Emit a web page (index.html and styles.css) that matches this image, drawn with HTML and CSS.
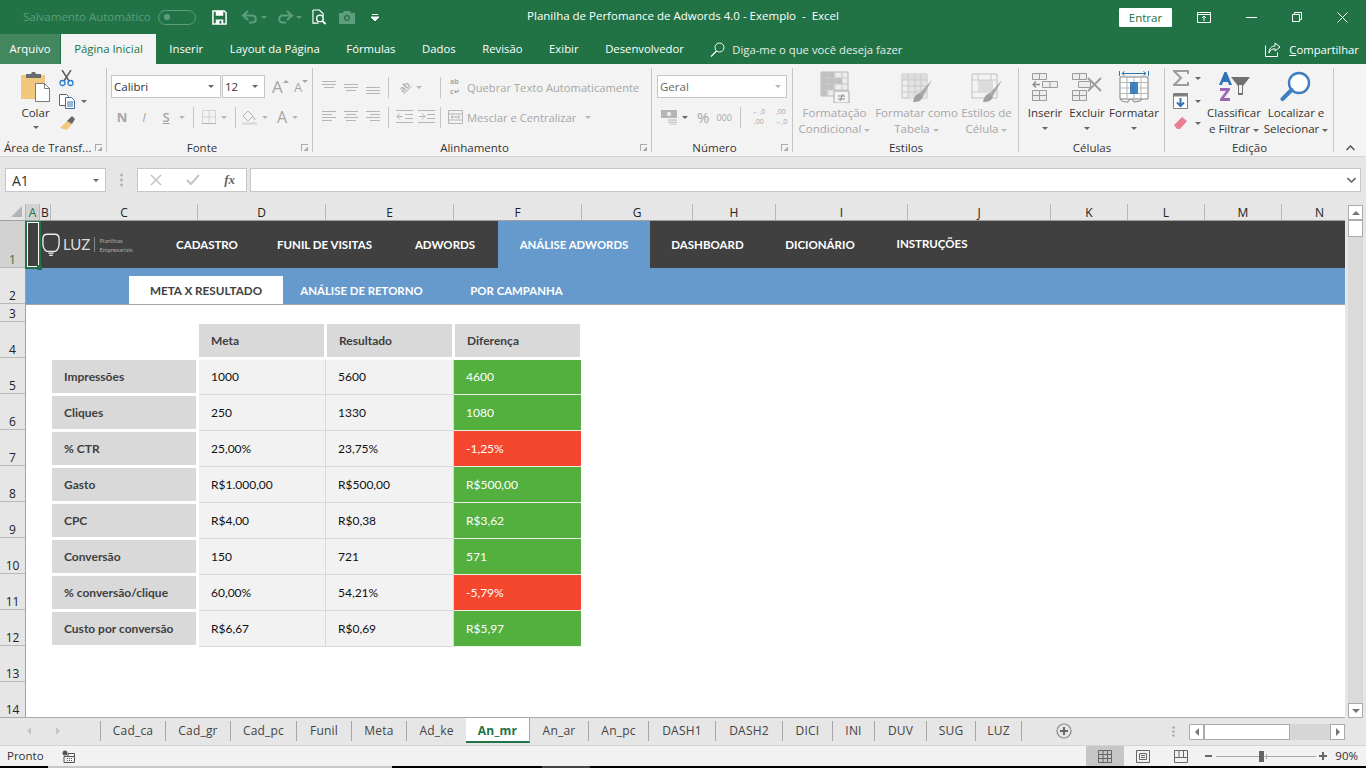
FILE: index.html
```html
<!DOCTYPE html>
<html lang="pt-BR">
  <head>
    <meta charset="UTF-8" />
    <title>Planilha de Perfomance de Adwords 4.0 - Exemplo - Excel</title>
    <link rel="stylesheet" href="styles.css">
  </head>
  <body>
    <!-- Title bar -->
    <div class="titlebar">
      <div class="qat">
        <span class="autosave">Salvamento Automático</span>
        <span class="toggle"><i></i></span>
        <svg class="q-save" width="15" height="15" viewBox="0 0 16 16"><path d="M1 1h12l2 2v12H1z" fill="none" stroke="#fff" stroke-width="1.600"/><path d="M4 1h8v5H4zM4 10h8v5H4z" fill="#fff"/><path d="M8 11.500h2v3H8z" fill="#217346"/></svg>
        <svg class="q-undo" width="18" height="14" viewBox="0 0 18 14"><path d="M7 1 2 5.500 7 10M2 5.500h9c5 0 5 7 0 7H8" fill="none" stroke="#5e9e7d" stroke-width="2"/></svg>
        <span class="caret dim"></span>
        <svg class="q-redo" width="18" height="14" viewBox="0 0 18 14"><path d="M11 1l5 4.500L11 10M16 5.500H7c-5 0-5 7 0 7h3" fill="none" stroke="#5e9e7d" stroke-width="2"/></svg>
        <span class="caret dim"></span>
        <svg class="q-prev" width="14" height="16" viewBox="0 0 15 17"><path d="M1 1h7l4 4v3M1 1v14h6" fill="none" stroke="#fff" stroke-width="1.200"/><circle cx="8.500" cy="10" r="3.500" fill="none" stroke="#fff" stroke-width="1.500"/><path d="m11 12.500 3.500 3.500" stroke="#fff" stroke-width="2"/></svg>
        <svg class="q-cam" width="16" height="13" viewBox="0 0 16 13"><path d="M0 2h4l1-2h6l1 2h4v11H0z" fill="#5e9e7d"/><circle cx="8" cy="7" r="3" fill="#217346"/><circle cx="8" cy="7" r="1.800" fill="#5e9e7d"/></svg>
        <svg class="q-more" width="8" height="7" viewBox="0 0 8 7"><path d="M1 .5h6M0 3h8L4 7z" stroke="#fff" fill="#fff" stroke-width="1"/></svg>
      </div>
      <div class="doc-title">Planilha de Perfomance de Adwords 4.0 - Exemplo &nbsp;-&nbsp; Excel</div>
      <div class="win">
        <button class="signin">Entrar</button>
        <svg class="w-opt" width="14" height="11" viewBox="0 0 14 11"><path d="M.5.500h13v10H.5zM.5 2.500h13" fill="none" stroke="#fff"/><path d="M7 9V4M5 6l2-2 2 2" fill="none" stroke="#fff"/></svg>
        <svg class="w-min" width="11" height="1" viewBox="0 0 11 1"><path d="M0 .5h11" stroke="#fff"/></svg>
        <svg class="w-max" width="10" height="10" viewBox="0 0 10 10"><path d="M.5 2.500h7v7h-7zM2.500 2.500v-2h7v7h-2" fill="none" stroke="#fff"/></svg>
        <svg class="w-close" width="11" height="11" viewBox="0 0 11 11"><path d="m.5.500 10 10M10.500.500l-10 10" stroke="#fff"/></svg>
      </div>
    </div>

    <!-- Ribbon tabs -->
    <div class="tabs">
      <div class="tab file">Arquivo</div>
      <div class="tab active">Página Inicial</div>
      <div class="tab">Inserir</div>
      <div class="tab">Layout da Página</div>
      <div class="tab">Fórmulas</div>
      <div class="tab">Dados</div>
      <div class="tab">Revisão</div>
      <div class="tab">Exibir</div>
      <div class="tab">Desenvolvedor</div>
      <div class="tell">
        <svg width="15" height="15" viewBox="0 0 15 15"><circle cx="9.500" cy="5.500" r="4.500" fill="none" stroke="#fff"/><path d="M6.500 9 1 14.500" stroke="#fff" stroke-width="1.200"/></svg>
        <span>Diga-me o que você deseja fazer</span>
      </div>
      <div class="share">
        <svg width="17" height="15" viewBox="0 0 17 15"><path d="M.5 3.500v11h12v-4" fill="none" stroke="#fff"/><path d="M10 1l5 4-5 4V6.800C7 6.800 5 8 4 11c0-4 2-6.800 6-7z" fill="none" stroke="#fff"/></svg>
        <span><u>C</u>ompartilhar</span>
      </div>
    </div>

    <!-- Ribbon -->
    <div class="ribbon">
      <div class="group g-clip">
        <div class="body clip-body">
          <div class="big paste">
            <svg width="32" height="32" viewBox="0 0 32 32"><path d="M1 4h24v24H1z" fill="#f0c97f"/><path d="M6 3h5l1-2h3l1 2h5v4H6z" fill="#6b6b6b"/><path d="M15.500 12.500h9l5 5v13h-14z" fill="#fff" stroke="#7a7a7a"/><path d="M24.500 12.500v5h5" fill="none" stroke="#7a7a7a"/></svg>
            <span>Colar</span>
            <span class="caret"></span>
          </div>
          <div class="clip-tools">
            <svg width="16" height="17" viewBox="0 0 16 17"><path d="m3 0 7 11M12 0 5 11" stroke="#555" stroke-width="1.400"/><circle cx="3.500" cy="13" r="2.500" fill="none" stroke="#2b7cd3" stroke-width="1.300"/><circle cx="11.500" cy="13" r="2.500" fill="none" stroke="#2b7cd3" stroke-width="1.300"/></svg>
            <div class="tool-line">
              <svg width="16" height="15" viewBox="0 0 16 15"><path d="M.5.500h7l2 2v9H.5z" fill="#fff" stroke="#666"/><path d="M6.500 3.500h6l3 3v8h-9z" fill="#fff" stroke="#3c6ea5"/><path d="M8 8h6M8 10h6M8 12h6" stroke="#3c6ea5"/></svg>
              <span class="caret"></span>
            </div>
            <svg width="16" height="15" viewBox="0 0 16 15"><path d="m9 4 4 4-5 6-7-2z" fill="#f0c97f"/><path d="m8 5 5-5 3 3-3 5z" fill="#666"/></svg>
          </div>
        </div>
        <div class="label left">Área de Transf...<i class="launch"></i></div>
      </div>

      <div class="group g-font">
        <div class="body rows">
          <div class="line">
            <div class="combo c-font">Calibri<span class="caret"></span></div>
            <div class="combo c-size">12<span class="caret"></span></div>
            <span class="letter a-up">A<em class="tri up"></em></span>
            <span class="letter a-down">A<em class="tri"></em></span>
          </div>
          <div class="line">
            <span class="slot b">N</span>
            <span class="slot it">I</span>
            <span class="slot under">S</span>
            <span class="caret pale first"></span>
            <span class="sep"></span>
            <svg width="14" height="14" viewBox="0 0 14 14"><path d="M.5.500h13v13H.5zM7 .5v13M.5 7h13" fill="none" stroke="#b5b5b5" stroke-dasharray="1 1"/><path d="M0 13.500h14" stroke="#b5b5b5"/></svg>
            <span class="caret pale"></span>
            <span class="sep"></span>
            <svg class="fill-ico" width="15" height="15" viewBox="0 0 15 15"><path d="M6 1 1 6l5 5 5-5z" fill="none" stroke="#b5b5b5"/><path d="M11 6c2 2 3 4 2 4s-2-2-2-4z" fill="#b5b5b5"/><path d="M0 12h15v3H0z" fill="#dedede"/></svg>
            <span class="caret pale"></span>
            <span class="letter a-color">A</span>
            <span class="caret pale"></span>
          </div>
        </div>
        <div class="label with-launch">Fonte<i class="launch"></i></div>
      </div>

      <div class="group g-align">
        <div class="body rows">
          <div class="line">
            <svg class="al" width="14" height="14" viewBox="0 0 14 14"><path d="M0 1.500h14M0 4.500h14M2 7.500h10" stroke="#b5b5b5"/></svg>
            <svg class="al" width="14" height="14" viewBox="0 0 14 14"><path d="M0 4.500h14M0 7.500h14M2 10.500h10" stroke="#b5b5b5"/></svg>
            <svg class="al" width="14" height="14" viewBox="0 0 14 14"><path d="M0 7.500h14M0 10.500h14M0 13.500h14" stroke="#b5b5b5"/></svg>
            <span class="sep s-first"></span>
            <span class="orient"><b>ab</b></span>
            <span class="caret pale"></span>
            <span class="sep s-wrap"></span>
            <span class="wrap-ico">ab<br>c↵</span>
            <span class="dis wrap-text">Quebrar Texto Automaticamente</span>
          </div>
          <div class="line">
            <svg class="al" width="14" height="14" viewBox="0 0 14 14"><path d="M0 1.500h14M0 4.500h10M0 7.500h14M0 10.500h10" stroke="#b5b5b5"/></svg>
            <svg class="al" width="14" height="14" viewBox="0 0 14 14"><path d="M0 1.500h14M2 4.500h10M0 7.500h14M2 10.500h10" stroke="#b5b5b5"/></svg>
            <svg class="al" width="14" height="14" viewBox="0 0 14 14"><path d="M0 1.500h14M4 4.500h10M0 7.500h14M4 10.500h10" stroke="#b5b5b5"/></svg>
            <span class="sep s-first"></span>
            <svg width="17" height="14" viewBox="0 0 17 14"><path d="M0 .5h17M9 4.500h8M9 8.500h8M0 12.500h17M7 6.500H1M4 3.500l-3 3 3 3" fill="none" stroke="#b5b5b5"/></svg>
            <svg class="ind" width="17" height="14" viewBox="0 0 17 14"><path d="M0 .5h17M9 4.500h8M9 8.500h8M0 12.500h17M1 6.500h6M4 3.500l3 3-3 3" fill="none" stroke="#b5b5b5"/></svg>
            <span class="sep s-wrap2"></span>
            <svg width="15" height="14" viewBox="0 0 15 14"><path d="M.5.500h14v13H.5zM.5 4h14M.5 10h14M3 7h9M3 7l2-1.500M3 7l2 1.500M12 7l-2-1.500M12 7l-2 1.500" fill="none" stroke="#b5b5b5"/></svg>
            <span class="dis merge-text">Mesclar e Centralizar</span>
            <span class="caret pale merge-caret"></span>
          </div>
        </div>
        <div class="label with-launch">Alinhamento<i class="launch"></i></div>
      </div>

      <div class="group g-num">
        <div class="body rows">
          <div class="line">
            <div class="combo c-num">Geral<span class="caret pale"></span></div>
          </div>
          <div class="line num-tools">
            <svg width="16" height="15" viewBox="0 0 16 15"><path d="M0 0h16v8H0z" fill="#b5b5b5"/><circle cx="8" cy="4" r="2" fill="#f3f3f3"/><path d="M7 10h9M7 12.500h9M9 15h6" stroke="#c8c8c8" stroke-width="1.500"/></svg>
            <span class="caret"></span>
            <span class="dis pct">%</span>
            <span class="dis thou">000</span>
            <span class="sep"></span>
            <span class="dis dec">←,0<br>,00</span>
            <span class="dis dec">,00<br>→,0</span>
          </div>
        </div>
        <div class="label with-launch">Número<i class="launch"></i></div>
      </div>

      <div class="group g-styles">
        <div class="body bigs">
          <div class="big dis s1">
            <svg width="30" height="32" viewBox="0 0 30 32"><path d="M1 1h27v24H1z" fill="#ececec" stroke="#b8b8b8"/><path d="M1 1h13v6h8v6h-8v6H7v6H1z" fill="#c0c0c0"/><path d="M8 1v24M15 1v24M22 1v24M1 7h27M1 13h27M1 19h27" stroke="#c9c9c9"/><path d="M14 20h15v12H14z" fill="#f3f3f3" stroke="#a8a8a8"/><path d="M18 25h7M18 28h7M20 30l3-7" stroke="#8c8c8c"/></svg>
            <span>Formatação</span>
            <span>Condicional <i class="caret pale"></i></span>
          </div>
          <div class="big dis s2">
            <svg width="32" height="32" viewBox="0 0 32 32"><path d="M1 3h25v24H1z" fill="#f0f0f0" stroke="#c0c0c0"/><path d="M1 3h25v6H1z" fill="#dcdcdc"/><path d="M7 9h19v18H7z" fill="#e3e3e3"/><path d="M7 3v24M14 3v24M20 3v24M1 9h25M1 15h25M1 21h25" stroke="#c9c9c9"/><path d="M31 9 19 22l3 3z" fill="#a8a8a8"/><path d="M19 22c-4 1-6 4-7 9 5 0 9-1 10-6z" fill="#a0a0a0"/></svg>
            <span>Formatar como</span>
            <span>Tabela <i class="caret pale"></i></span>
          </div>
          <div class="big dis s3">
            <svg width="32" height="32" viewBox="0 0 32 32"><path d="M1 3h25v24H1z" fill="#f3f3f3" stroke="#c0c0c0"/><path d="M7 9h15v13H7z" fill="#dcdcdc"/><path d="M7 3v6M20 3v6M1 9h25M1 21h6" stroke="#c9c9c9"/><path d="M31 9 19 22l3 3z" fill="#a8a8a8"/><path d="M19 22c-4 1-6 4-7 9 5 0 9-1 10-6z" fill="#a0a0a0"/></svg>
            <span>Estilos de</span>
            <span>Célula <i class="caret pale"></i></span>
          </div>
        </div>
        <div class="label">Estilos</div>
      </div>

      <div class="group g-cells">
        <div class="body bigs">
          <div class="big c1">
            <svg width="28" height="32" viewBox="0 0 28 32"><path d="M1.500 2.500h14v6h-14zM8.500 2.500v6M1.500 19.500h14v10h-14zM1.500 24.500h14M8.500 19.500v10M11.500 10.500h15v6h-15zM19 10.500v6" fill="#ededed" stroke="#9c9c9c"/><path d="M9 13.500H2M5 10.500l-3 3 3 3" fill="none" stroke="#8c8c8c" stroke-width="1.400"/></svg>
            <span>Inserir</span>
            <i class="caret"></i>
          </div>
          <div class="big c2">
            <svg width="32" height="32" viewBox="0 0 32 32"><path d="M1.500 2.500h14v6h-14zM8.500 2.500v6M1.500 19.500h14v10h-14zM1.500 24.500h14M8.500 19.500v10M7.500 10.500h12v6h-12z" fill="#ededed" stroke="#9c9c9c"/><path d="m17 7 13 13M30 7 17 20" stroke="#9c9c9c" stroke-width="1.800"/></svg>
            <span>Excluir</span>
            <i class="caret"></i>
          </div>
          <div class="big c3">
            <svg width="30" height="32" viewBox="0 0 30 32"><path d="M.5 0v5M29.500 0v5M3 2.500h24M3 2.500l2.500-2M3 2.500l2.500 2M27 2.500l-2.500-2M27 2.500l-2.500 2" fill="none" stroke="#2f75b5"/><path d="M1 6h28v22H1z" fill="#fff" stroke="#808080"/><path d="M8 6v22M15 6v22M22 6v22M1 11.500h28M1 17h28M1 22.500h28" stroke="#b5b5b5"/><path d="M11 11h8v12h-8z" fill="#2f75b5" opacity=".9"/><path d="M1 28c2 3 5 3 8 3l2-3M13 28l2 3 6-1 2-2" fill="none" stroke="#808080"/></svg>
            <span>Formatar</span>
            <i class="caret"></i>
          </div>
        </div>
        <div class="label">Células</div>
      </div>

      <div class="group g-edit">
        <div class="body edit-body">
          <div class="edit-tools">
            <div class="tool-line">
              <svg width="16" height="16" viewBox="0 0 16 16"><path d="M15 4V1H1l7 7-7 7h14v-3" fill="none" stroke="#9c9c9c" stroke-width="2"/></svg>
              <span class="caret"></span>
            </div>
            <div class="tool-line">
              <svg width="16" height="16" viewBox="0 0 16 16"><path d="M.5.500h14v15H.5z" fill="#fff" stroke="#808080"/><path d="M.5.500h14v3H.5z" fill="#808080"/><path d="M7.500 5v8M4 9.500l3.500 3.500L11 9.500" fill="none" stroke="#2f75b5" stroke-width="2"/></svg>
              <span class="caret"></span>
            </div>
            <div class="tool-line">
              <svg width="16" height="14" viewBox="0 0 16 14"><path d="m1 9 8-8 5 4-7 8H4z" fill="#e97f93"/></svg>
              <span class="caret"></span>
            </div>
          </div>
          <div class="big e1">
            <svg width="32" height="32" viewBox="0 0 32 32"><path d="M1 14 6.500 1h2L14 14h-3l-1-3H5l-1 3z" fill="#2f75b5"/><path d="M2 17h10v2l-6 8h6v3H2v-2l6-8H2z" fill="#9a67b5"/><path d="M13 6h19l-7 9v9h-5v-9z" fill="#707070"/><path d="M21 14h3v8h-3z" fill="#f3f3f3"/></svg>
            <span>Classificar</span>
            <span>e Filtrar <i class="caret"></i></span>
          </div>
          <div class="big e2">
            <svg width="32" height="32" viewBox="0 0 32 32"><circle cx="19" cy="12" r="10" fill="#fff" stroke="#3f7fbf" stroke-width="2.400"/><path d="M11.500 19 2.500 28" stroke="#3f7fbf" stroke-width="4" stroke-linecap="round"/></svg>
            <span>Localizar e</span>
            <span>Selecionar <i class="caret"></i></span>
          </div>
        </div>
        <div class="label">Edição</div>
      </div>
      <svg class="collapse" width="9" height="6" viewBox="0 0 9 6"><path d="M.5 5 4.500 1l4 4" fill="none" stroke="#555" stroke-width="1.500"/></svg>
    </div>

    <!-- Formula bar -->
    <div class="formula">
      <div class="name-box">A1<span class="caret"></span></div>
      <div class="dots"></div>
      <div class="fx-box">
        <svg width="12" height="12" viewBox="0 0 12 12"><path d="m1 1 10 10M11 1 1 11" stroke="#c4c4c4" stroke-width="1.600"/></svg>
        <svg width="14" height="12" viewBox="0 0 14 12"><path d="m1 6 4 4 8-9" fill="none" stroke="#c4c4c4" stroke-width="2"/></svg>
        <span class="fx">fx</span>
      </div>
      <div class="formula-input">
        <svg width="9" height="6" viewBox="0 0 9 6"><path d="M.5 1l4 4 4-4" fill="none" stroke="#666" stroke-width="1.600"/></svg>
      </div>
    </div>

    <!-- Sheet -->
    <div class="work">
      <div class="grid-wrap">
        <div class="col-heads">
          <div class="corner"><i></i></div>
          <div class="ch on w-a">A</div><div class="ch w-b">B</div><div class="ch w-c">C</div>
          <div class="ch w-d">D</div><div class="ch w-d">E</div><div class="ch w-d">F</div>
          <div class="ch w-g">G</div><div class="ch w-h">H</div><div class="ch w-i">I</div>
          <div class="ch w-j">J</div><div class="ch w-k">K</div><div class="ch w-k">L</div>
          <div class="ch w-k">M</div><div class="ch w-n">N</div>
        </div>
        <div class="sheet">
          <div class="row-heads">
            <div class="rh r1 on">1</div>
            <div class="rh">2</div>
            <div class="rh r3">3</div>
            <div class="rh">4</div><div class="rh">5</div><div class="rh">6</div>
            <div class="rh">7</div><div class="rh">8</div><div class="rh">9</div>
            <div class="rh">10</div><div class="rh">11</div><div class="rh">12</div>
            <div class="rh">13</div><div class="rh">14</div>
          </div>
          <div class="cells">
            <div class="selection"><i></i></div>
            <div class="nav">
              <div class="logo">
                <svg width="18" height="26" viewBox="0 0 20 26"><path d="M5 20C2 18 1 15 1 11V6c0-3 2-5 5-5h8c3 0 5 2 5 5v5c0 4-1 7-4 9z" fill="none" stroke="#eee" stroke-width="1.500"/><path d="M7 22h6M8 24.500h4" stroke="#eee" stroke-width="1.400"/></svg>
                <span class="luz">LUZ</span>
                <span class="luz-sub">Planilhas<br>Empresariais</span>
              </div>
              <div class="nav-item">CADASTRO</div>
              <div class="nav-item">FUNIL DE VISITAS</div>
              <div class="nav-item">ADWORDS</div>
              <div class="nav-item current">ANÁLISE ADWORDS</div>
              <div class="nav-item">DASHBOARD</div>
              <div class="nav-item">DICIONÁRIO</div>
              <div class="nav-item raised">INSTRUÇÕES</div>
            </div>
            <div class="subnav">
              <div class="sub-item current">META X RESULTADO</div>
              <div class="sub-item">ANÁLISE DE RETORNO</div>
              <div class="sub-item">POR CAMPANHA</div>
            </div>
            <div class="report">
              <div></div>
              <div class="th">Meta</div>
              <div class="th th-r">Resultado</div>
              <div class="th th-d">Diferença</div>

              <div class="rl">Impressões</div><div class="td top">1000</div><div class="td top">5600</div><div class="td top good">4600</div>
              <div class="rl">Cliques</div><div class="td">250</div><div class="td">1330</div><div class="td good">1080</div>
              <div class="rl">% CTR</div><div class="td">25,00%</div><div class="td">23,75%</div><div class="td bad">-1,25%</div>
              <div class="rl">Gasto</div><div class="td">R$1.000,00</div><div class="td">R$500,00</div><div class="td good">R$500,00</div>
              <div class="rl">CPC</div><div class="td">R$4,00</div><div class="td">R$0,38</div><div class="td good">R$3,62</div>
              <div class="rl">Conversão</div><div class="td">150</div><div class="td">721</div><div class="td good">571</div>
              <div class="rl">% conversão/clique</div><div class="td">60,00%</div><div class="td">54,21%</div><div class="td bad">-5,79%</div>
              <div class="rl">Custo por conversão</div><div class="td">R$6,67</div><div class="td">R$0,69</div><div class="td good">R$5,97</div>
            </div>
          </div>
        </div>
      </div>
      <div class="vscroll">
        <div class="sb-btn"><i class="tri-up"></i></div>
        <div class="sb-thumb"></div>
        <div class="sb-track"></div>
        <div class="sb-btn"><i class="tri-down"></i></div>
      </div>
    </div>

    <!-- Sheet tabs -->
    <div class="sheet-tabs">
      <div class="tab-arrows"><i class="ar-l"></i><i class="ar-r"></i></div>
      <div class="st-list">
        <div class="st">Cad_ca</div>
        <div class="st">Cad_gr</div>
        <div class="st">Cad_pc</div>
        <div class="st">Funil</div>
        <div class="st">Meta</div>
        <div class="st">Ad_ke</div>
        <div class="st active">An_mr</div>
        <div class="st">An_ar</div>
        <div class="st">An_pc</div>
        <div class="st">DASH1</div>
        <div class="st">DASH2</div>
        <div class="st">DICI</div>
        <div class="st">INI</div>
        <div class="st">DUV</div>
        <div class="st">SUG</div>
        <div class="st end">LUZ</div>
      </div>
      <svg class="add-sheet" width="16" height="16" viewBox="0 0 16 16"><circle cx="8" cy="8" r="7" fill="none" stroke="#8a8a8a" stroke-width="1.200"/><path d="M8 4v8M4 8h8" stroke="#666" stroke-width="2"/></svg>
      <div class="hsplit"></div>
      <div class="hscroll">
        <div class="hs-btn"><i class="ar-l dark"></i></div>
        <div class="hs-thumb"></div>
        <div class="hs-track"></div>
        <div class="hs-btn"><i class="ar-r dark"></i></div>
      </div>
    </div>

    <!-- Status bar -->
    <div class="status">
      <span class="ready">Pronto</span>
      <svg class="macro" width="13" height="13" viewBox="0 0 13 13"><circle cx="3" cy="3" r="2.500" fill="#555"/><path d="M2 6.500h10.500v6H2zM6 3.500h6.500v3H6z" fill="none" stroke="#555"/><path d="M5 8.500h6M5 10.500h6" stroke="#555" stroke-dasharray="1 1"/></svg>
      <div class="view on"><svg width="14" height="13" viewBox="0 0 14 13"><path d="M.5.500h13v12H.5zM.5 4.500h13M.5 8.500h13M5 .5v12M9.500.5v12" fill="none" stroke="#666"/></svg></div>
      <div class="view"><svg width="14" height="13" viewBox="0 0 14 13"><path d="M.5.500h13v12H.5z" fill="none" stroke="#666"/><path d="M3.500 3.500h7v6h-7zM5 5.500h4M5 7.500h4" fill="none" stroke="#666"/></svg></div>
      <div class="view"><svg width="14" height="13" viewBox="0 0 14 13"><path d="M.5.500h13v12H.5zM.5 7.500h13M5 .5v7M9.500.5v7" fill="none" stroke="#666"/></svg></div>
      <div class="zoom">
        <i class="z-minus"></i>
        <div class="z-track"><i class="z-tick"></i><i class="z-thumb"></i></div>
        <i class="z-plus"></i>
      </div>
      <span class="pct-label">90%</span>
    </div>
    <div class="taskbar"></div>
  </body>
</html>
```

FILE: styles.css
```css
* {
  box-sizing: border-box;
}

html,
body {
  margin: 0;
  height: 768px;
  overflow: hidden;
}

body {
  display: flex;
  flex-direction: column;
  font-family: "Open Sans", Arial, sans-serif;
  font-size: 11.5px;
  color: #333;
  background-color: #e6e6e6;
}

i,
em {
  font-style: normal;
}

.caret {
  display: inline-block;
  width: 0;
  height: 0;
  border-left: 3px solid transparent;
  border-right: 3px solid transparent;
  border-top: 3px solid #666;
  vertical-align: middle;
}

.caret.pale {
  border-top-color: #b8b8b8;
}

.caret.dim {
  border-top-color: #5e9e7d;
}

/* Title bar */
.titlebar {
  height: 34px;
  flex: none;
  background-color: #217346;
  color: white;
  display: flex;
  align-items: center;
  position: relative;
}

.qat {
  display: flex;
  align-items: center;
  padding-left: 23px;
}

.autosave {
  color: #5e9e7d;
  width: 135px;
  white-space: nowrap;
  padding-bottom: 1px;
}

.toggle {
  width: 38px;
  height: 15px;
  border: 1px solid #5e9e7d;
  border-radius: 8px;
  display: flex;
  align-items: center;
  padding-left: 5px;
}

.toggle i {
  width: 6px;
  height: 6px;
  border-radius: 50%;
  background-color: #5e9e7d;
}

.q-save {
  margin-left: 16px;
}

.q-undo {
  margin-left: 14px;
}

.qat .caret {
  margin-left: 2px;
}

.q-redo {
  margin-left: 9px;
}

.q-prev {
  margin-left: 10px;
}

.q-cam {
  margin-left: 13px;
}

.q-more {
  margin-left: 16px;
}

.doc-title {
  position: absolute;
  left: 0;
  right: 0;
  top: 8px;
  text-align: center;
  white-space: nowrap;
}

.win {
  margin-left: auto;
  display: flex;
  align-items: center;
  padding-right: 18px;
  position: relative;
}

.signin {
  width: 53px;
  height: 19px;
  padding: 0;
  border: none;
  border-radius: 1px;
  background-color: white;
  color: #217346;
  font: inherit;
  margin-right: 25px;
}

.w-min,
.w-max,
.w-close {
  margin-left: 35px;
}

/* Ribbon tabs */
.tabs {
  height: 30px;
  flex: none;
  background-color: #217346;
  color: white;
  display: flex;
  align-items: stretch;
  font-size: 11.3px;
}

.tab {
  padding: 0 13.3px;
  line-height: 29px;
  white-space: nowrap;
}

.tab.file {
  width: 60px;
  padding: 0;
  text-align: center;
  background-color: #43875f;
  margin-right: 1px;
}

.tab.active {
  width: 95px;
  padding: 0;
  text-align: center;
  background-color: #f3f3f3;
  color: #217346;
}

.tell {
  display: flex;
  align-items: center;
  gap: 7px;
  margin-left: 13px;
  color: #e4eee8;
}

.share {
  display: flex;
  align-items: center;
  gap: 7px;
  margin-left: auto;
  padding-right: 7px;
}

/* Ribbon */
.ribbon {
  height: 93px;
  flex: none;
  background-color: #f3f3f3;
  border-bottom: 1px solid #d4d4d4;
  display: flex;
  position: relative;
}

.group {
  margin-top: 4px;
  height: 88px;
  display: flex;
  flex-direction: column;
  position: relative;
}

.group::after {
  content: "";
  position: absolute;
  top: 0;
  right: 0;
  bottom: 4px;
  width: 1px;
  background-color: #c6c6c6;
}

.g-clip { width: 107px; }
.g-font { width: 206px; }
.g-align { width: 339px; }
.g-num { width: 141px; }
.g-styles { width: 226px; }
.g-cells { width: 146px; }
.g-edit { width: 169px; }

.body {
  height: 72px;
}

.label {
  height: 16px;
  line-height: 16px;
  text-align: center;
  white-space: nowrap;
}

.label.left {
  text-align: left;
  padding-left: 4px;
}

.label.with-launch {
  padding-right: 16px;
}

.launch {
  position: absolute;
  right: 5px;
  bottom: 5px;
  width: 7px;
  height: 7px;
  border-left: 1px solid #aaa;
  border-top: 1px solid #aaa;
  background: linear-gradient(135deg, transparent 50%, #aaa 50%) no-repeat 2px 2px / 4px 4px;
}

.big {
  display: flex;
  flex-direction: column;
  align-items: center;
  line-height: 16px;
  white-space: nowrap;
}

.big svg {
  margin-bottom: 2px;
  flex: none;
}

.dis {
  color: #a6a6a6;
}

.rows {
  padding-top: 7px;
  display: flex;
  flex-direction: column;
  gap: 6px;
}

.line {
  height: 24px;
  display: flex;
  align-items: center;
  white-space: nowrap;
}

.sep {
  width: 1px;
  height: 21px;
  background-color: #c6c6c6;
  margin: 0 8px;
}

.combo {
  height: 23px;
  margin-bottom: 1px;
  background-color: white;
  border: 1px solid #c6c6c6;
  display: flex;
  align-items: center;
  justify-content: space-between;
  padding: 0 6px 0 2px;
}

/* Clipboard */
.clip-body {
  display: flex;
}

.paste {
  width: 58px;
  padding: 3px 0 0 13px;
}

.paste .caret {
  margin-top: 5px;
}

.clip-tools {
  padding-top: 2px;
  display: flex;
  flex-direction: column;
  gap: 7px;
  padding-left: 1px;
}

.tool-line {
  display: flex;
  align-items: center;
  gap: 6px;
}

/* Font */
.g-font .rows {
  padding-left: 4px;
}

.c-font {
  width: 110px;
  margin-right: 1px;
}

.c-size {
  width: 43px;
}

.letter {
  font-size: 17px;
  color: #a6a6a6;
  position: relative;
  line-height: 20px;
}

.a-up {
  margin-left: 7px;
  width: 15px;
}

.a-down {
  margin-left: 7px;
  font-size: 13px;
  width: 12px;
}

.tri {
  position: absolute;
  right: -2px;
  top: 3px;
  border-left: 3px solid transparent;
  border-right: 3px solid transparent;
  border-top: 3px solid #a6a6a6;
}

.tri.up {
  border-top: none;
  border-bottom: 3px solid #a6a6a6;
}

.slot {
  width: 22px;
  text-align: center;
  font-size: 13px;
  color: #a6a6a6;
}

.slot.b {
  font-weight: 700;
}

.slot.it {
  font-style: italic;
}

.slot.under {
  text-decoration: underline;
  font-weight: 600;
}

.g-font .line .caret {
  margin-left: 5px;
}

.g-font .line .caret.first {
  margin-left: 2px;
}

.g-font .combo .caret {
  margin-left: 0;
}

.g-font .fill-ico {
  margin-left: -2px;
}

.a-color {
  margin-left: 9px;
  font-size: 16px;
}

/* Alignment */
.g-align .rows {
  padding-left: 9px;
}

.al {
  margin-right: 8px;
}

.g-align .sep.s-first {
  margin: 0 7px 0 0;
}

.g-align .caret {
  margin-left: 3px;
}

.orient {
  width: 17px;
  height: 15px;
  display: flex;
  align-items: center;
  justify-content: center;
  color: #a6a6a6;
  font-size: 9px;
  line-height: 9px;
}

.orient b {
  font-weight: 600;
  transform: rotate(-45deg);
  border-bottom: 1px solid #b5b5b5;
}

.g-align .sep.s-wrap {
  margin: 0 9px 0 18px;
}

.g-align .sep.s-wrap2 {
  margin: 0 7px 0 5px;
}

.ind {
  margin-left: 5px;
}

.wrap-ico {
  width: 14px;
  color: #a6a6a6;
  font-size: 7px;
  line-height: 10px;
  font-weight: 700;
}

.wrap-text {
  margin-left: 3px;
  font-size: 11.2px;
}

.merge-text {
  margin-left: 4px;
  font-size: 11.2px;
}

.g-align .merge-caret {
  margin-left: 9px;
}

/* Number */
.g-num .rows {
  padding-left: 5px;
}

.c-num {
  width: 130px;
  color: #666;
  padding-right: 5px;
}

.num-tools {
  padding-left: 4px;
}

.num-tools .caret {
  margin-left: 5px;
}

.pct {
  font-size: 15px;
  margin-left: 9px;
}

.thou {
  font-size: 9px;
  margin-left: 7px;
}

.num-tools .sep {
  margin: 0 7px 0 8px;
}

.dec {
  font-size: 7px;
  line-height: 10px;
  width: 22px;
  text-align: center;
}

/* Big button rows */
.bigs {
  padding-top: 3px;
  display: flex;
}

.s1 { width: 85px; margin-left: -1px; }
.s2 { width: 79px; }
.s3 { width: 61px; }
.c1 { width: 52px; }
.c2 { width: 32px; }
.c3 { width: 62px; }

.big i.caret {
  vertical-align: 1px;
}

.big > i.caret {
  margin-top: 6px;
}

/* Editing */
.edit-body {
  display: flex;
}

.edit-tools {
  padding: 2px 0 0 8px;
  display: flex;
  flex-direction: column;
  gap: 7px;
  width: 40px;
}

.e1 {
  width: 58px;
  padding-top: 3px;
}

.e2 {
  width: 66px;
  padding-top: 3px;
}

.collapse {
  position: absolute;
  right: 11px;
  bottom: 5px;
}

/* Formula bar */
.formula {
  height: 47px;
  flex: none;
  padding: 11px 5px 12px;
  display: flex;
  background-color: #e6e6e6;
}

.name-box {
  width: 101px;
  background-color: white;
  border: 1px solid #c6c6c6;
  display: flex;
  align-items: center;
  justify-content: space-between;
  padding: 0 6px;
  font-size: 14px;
}

.dots {
  width: 31px;
  margin: 5px 0;
  background: radial-gradient(circle, #aaa 1px, transparent 1.500px) center / 3px 5px repeat-y;
}

.fx-box {
  width: 110px;
  background-color: white;
  border: 1px solid #c6c6c6;
  display: flex;
  align-items: center;
  justify-content: space-between;
  padding: 0 11px 0 12px;
}

.fx {
  font-family: "Liberation Serif", serif;
  font-style: italic;
  font-weight: 700;
  font-size: 13px;
  color: #666;
}

.formula-input {
  flex: 1;
  margin-left: 3px;
  background-color: white;
  border: 1px solid #c6c6c6;
  display: flex;
  align-items: center;
  justify-content: flex-end;
  padding-right: 4px;
}

/* Sheet */
.work {
  flex: none;
  height: 514px;
  display: flex;
}

.grid-wrap {
  width: 1345px;
  display: flex;
  flex-direction: column;
}

.col-heads {
  height: 17px;
  flex: none;
  display: flex;
  background-color: #e6e6e6;
  border-bottom: 1px solid #9f9f9f;
  font-size: 12px;
  color: #222;
}

.corner {
  width: 26px;
  position: relative;
  border-right: 1px solid #b4b4b4;
}

.corner i {
  position: absolute;
  right: 3px;
  bottom: 3px;
  border-left: 11px solid transparent;
  border-bottom: 11px solid #b4b4b4;
}

.ch {
  text-align: center;
  line-height: 17px;
  border-right: 1px solid #b8b8b8;
}

.ch.on {
  background-color: #d2d2d2;
  color: #217346;
}

.w-a { width: 14px; }
.w-b { width: 11px; }
.w-c { width: 147px; }
.w-d { width: 128px; }
.w-g { width: 111px; }
.w-h { width: 83px; }
.w-i { width: 132px; }
.w-j { width: 143px; }
.w-k { width: 77px; }
.w-n { width: 63px; border-right: none; padding-left: 12px; }

.sheet {
  flex: 1;
  display: flex;
  min-height: 0;
  overflow: hidden;
  border-bottom: 1px solid #ababab;
}

.row-heads {
  width: 26px;
  flex: none;
  background-color: #e6e6e6;
  border-right: 1px solid #9f9f9f;
  font-size: 12px;
  color: #222;
}

.rh {
  height: 36px;
  border-bottom: 1px solid #b8b8b8;
  display: flex;
  align-items: flex-end;
  justify-content: center;
  line-height: 14px;
}

.rh.r1 {
  height: 47px;
  background-color: #d2d2d2;
  color: #217346;
}

.rh.r3 {
  height: 18px;
}

.cells {
  flex: 1;
  position: relative;
  background-color: white;
  font-family: "Lato", sans-serif;
}

.selection {
  position: absolute;
  left: -1px;
  top: -1px;
  width: 16px;
  height: 49px;
  border: 2px solid #217346;
  outline: 1px solid white;
  outline-offset: -3px;
  z-index: 2;
}

.selection i {
  position: absolute;
  right: -3px;
  bottom: -3px;
  width: 5px;
  height: 5px;
  background-color: #217346;
}

.nav {
  height: 47px;
  background-color: #404040;
  color: white;
  display: grid;
  grid-template-columns: 131px 100px 135px 106px 152px 115px 110px 114px;
  font-size: 11.5px;
  font-weight: 700;
}

.logo {
  display: flex;
  align-items: center;
  padding-left: 16px;
  font-weight: 400;
  color: #ddd;
}

.luz {
  font-size: 15px;
  margin-left: 3px;
  padding-right: 4px;
  border-right: 1px solid #888;
  line-height: 15px;
}

.luz-sub {
  font-size: 6px;
  line-height: 9px;
  margin-left: 4px;
  white-space: nowrap;
  color: #aaa;
}

.nav-item {
  display: flex;
  align-items: center;
  justify-content: center;
  white-space: nowrap;
}

.nav-item.current {
  background-color: #6699cc;
  font-size: 11.4px;
}

.nav-item.raised {
  padding-bottom: 2px;
}

.subnav {
  height: 37px;
  background-color: #6699cc;
  border-bottom: 1px solid #a6a6a6;
  color: white;
  padding: 8px 0 0 103px;
  display: grid;
  grid-template-columns: 154px 157px 153px;
  font-size: 11.4px;
  font-weight: 700;
}

.sub-item {
  display: flex;
  align-items: center;
  justify-content: center;
  white-space: nowrap;
}

.sub-item.current {
  background-color: white;
  color: #404040;
  font-size: 11.7px;
}

.report {
  margin: 17px 0 0 26px;
  display: grid;
  grid-template-columns: 147px 127px 128px 127px;
  grid-template-rows: 37px repeat(8, 36px);
  width: 529px;
  font-size: 12px;
}

.th {
  margin: 2px 2px 2px 0;
  padding-left: 12px;
  background-color: #d9d9d9;
  display: flex;
  align-items: center;
  font-weight: 700;
  color: #404040;
}

.th-r {
  margin-left: 1px;
}

.th-d {
  margin: 2px 1px;
}

.rl {
  margin: 1px 3px 2px 0;
  padding-left: 12px;
  background-color: #d9d9d9;
  display: flex;
  align-items: center;
  font-weight: 700;
  color: #404040;
  white-space: nowrap;
}

.td {
  padding-left: 12px;
  background-color: #f2f2f2;
  border-right: 1px solid #d9d9d9;
  border-bottom: 1px solid #d9d9d9;
  display: flex;
  align-items: center;
  color: #111;
}

.td.top {
  border-top: 1px solid white;
  padding-bottom: 1px;
}

.td.good {
  background-color: #54b03e;
  color: white;
  border-right: none;
  border-bottom-color: #eaf3e6;
}

.td.bad {
  background-color: #f4472e;
  color: white;
  border-right: none;
  border-bottom-color: #eaf3e6;
}

/* Scrollbars */
.vscroll {
  flex: 1;
  display: flex;
  flex-direction: column;
  padding: 1px 3px 0;
  background-color: #e6e6e6;
}

.sb-btn {
  height: 15px;
  flex: none;
  background-color: white;
  border: 1px solid #ababab;
  display: flex;
  align-items: center;
  justify-content: center;
}

.sb-thumb {
  height: 17px;
  flex: none;
  background-color: white;
  border: 1px solid #ababab;
}

.sb-track {
  flex: 1;
  background-color: #dadada;
}

.tri-up {
  border-left: 4px solid transparent;
  border-right: 4px solid transparent;
  border-bottom: 4px solid #777;
}

.tri-down {
  border-left: 4px solid transparent;
  border-right: 4px solid transparent;
  border-top: 4px solid #777;
}

/* Sheet tabs */
.sheet-tabs {
  height: 27px;
  flex: none;
  background-color: #e6e6e6;
  display: flex;
  align-items: flex-start;
  padding-right: 21px;
  color: #444;
  font-size: 12px;
}

.tab-arrows {
  width: 100px;
  height: 25px;
  padding-left: 27px;
  display: flex;
  align-items: center;
  gap: 25px;
}

.ar-l {
  border-top: 4px solid transparent;
  border-bottom: 4px solid transparent;
  border-right: 4px solid #c4c4c4;
}

.ar-r {
  border-top: 4px solid transparent;
  border-bottom: 4px solid transparent;
  border-left: 4px solid #c4c4c4;
}

.ar-l.dark {
  border-right-color: #777;
}

.ar-r.dark {
  border-left-color: #777;
}

.st-list {
  display: grid;
  grid-template-columns: 65px 65px 66px 55px 55px 60px 64px 58px 60px 67px 67px 50px 42px 52px 49px 47px;
  letter-spacing: 0.2px;
}

.st {
  height: 20px;
  line-height: 20px;
  text-align: center;
  border-left: 1px solid #a6a6a6;
  margin-top: 3px;
  white-space: nowrap;
}

.st.active {
  height: 25px;
  margin-top: 0;
  padding-top: 3px;
  background-color: white;
  color: #217346;
  font-weight: 700;
  border-left: none;
  border-right: 1px solid #a6a6a6;
  border-bottom: 2px solid #217346;
}

.st.active + .st {
  border-left: none;
}

.st.end {
  border-right: 1px solid #a6a6a6;
}

.add-sheet {
  margin: 5px 0 0 34px;
}

.hsplit {
  margin: 8px 0 0 auto;
  width: 3px;
  height: 11px;
  background: radial-gradient(circle, #aaa 1px, transparent 1.500px) center / 3px 4px repeat-y;
}

.hscroll {
  width: 156px;
  height: 16px;
  margin: 6px 0 0 14px;
  display: flex;
}

.hs-btn {
  width: 15px;
  flex: none;
  background-color: white;
  border: 1px solid #ababab;
  display: flex;
  align-items: center;
  justify-content: center;
}

.hs-thumb {
  width: 86px;
  flex: none;
  background-color: white;
  border: 1px solid #ababab;
}

.hs-track {
  flex: 1;
  background-color: #d6d6d6;
}

/* Status bar */
.status {
  height: 21px;
  flex: none;
  background-color: #f2f2f2;
  border-top: 1px solid #d4d4d4;
  display: flex;
  align-items: center;
  color: #333;
}

.ready {
  margin-left: 7px;
  width: 55px;
  padding-bottom: 2px;
}

.macro {
  margin-right: auto;
}

.view {
  width: 38px;
  height: 20px;
  display: flex;
  align-items: center;
  justify-content: center;
}

.view.on {
  background-color: #c6c6c6;
}

.zoom {
  display: flex;
  align-items: center;
  margin-left: 5px;
}

.z-minus {
  width: 7px;
  height: 2px;
  background-color: #666;
}

.z-plus {
  width: 8px;
  height: 8px;
  background: linear-gradient(#666, #666) center / 8px 2px no-repeat, linear-gradient(#666, #666) center / 2px 8px no-repeat;
}

.z-track {
  width: 100px;
  height: 1px;
  margin: 0 3px 0 4px;
  background-color: #aaa;
  position: relative;
}

.z-thumb {
  position: absolute;
  left: 43px;
  top: -5px;
  width: 5px;
  height: 11px;
  background-color: #666;
}

.z-tick {
  position: absolute;
  left: 50px;
  top: -2px;
  width: 1px;
  height: 5px;
  background-color: #aaa;
}

.pct-label {
  margin: 0 8px;
  padding-bottom: 2px;
}

.taskbar {
  flex: 1;
  background: linear-gradient(to right, #000 48px, #c8c8c8 48px, #c8c8c8 392px, #000 392px, #000 542px, #444 542px, #444 590px, #000 590px);
}
```
